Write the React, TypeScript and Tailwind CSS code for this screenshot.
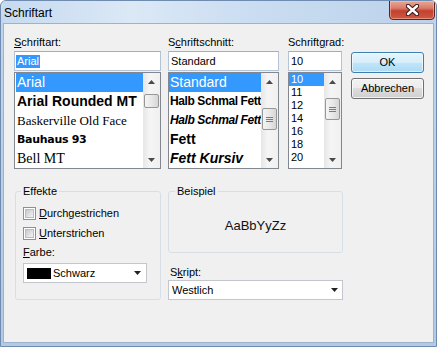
import React from 'react';

type Row = { text: string; cls: string; selected?: boolean };

const fontRows: Row[] = [
  { text: 'Arial', cls: "text-[14px] font-['Liberation_Sans',Arial,sans-serif]", selected: true },
  { text: 'Arial Rounded MT', cls: "text-[14px] font-bold font-['Liberation_Sans',Arial,sans-serif]" },
  { text: 'Baskerville Old Face', cls: "text-[13px] font-['Liberation_Serif',serif]" },
  { text: 'Bauhaus 93', cls: "text-[11px] font-bold tracking-[-0.3px] font-['DejaVu_Sans',sans-serif]" },
  { text: 'Bell MT', cls: "text-[14px] font-['Liberation_Serif',serif]" },
];

const styleRows: Row[] = [
  { text: 'Standard', cls: 'text-[14px]', selected: true },
  { text: 'Halb Schmal Fett', cls: 'text-[12px] font-bold tracking-[-0.4px]' },
  { text: 'Halb Schmal Fett', cls: 'text-[12px] font-bold italic tracking-[-0.4px]' },
  { text: 'Fett', cls: 'text-[14px] font-bold' },
  { text: 'Fett Kursiv', cls: 'text-[14px] font-bold italic' },
];

const sizes = ['10', '11', '12', '14', '16', '18', '20'];

function Arrow({ up, color = '#222' }: { up?: boolean; color?: string }) {
  return (
    <svg width="7" height="4" viewBox="0 0 7 4" className="shrink-0">
      <path d={up ? 'M0 4 L3.5 0 L7 4 Z' : 'M0 0 L7 0 L3.5 4 Z'} fill={color} />
    </svg>
  );
}

function ScrollBar({ thumb, grip }: { thumb: string; grip?: boolean }) {
  return (
    <div className="w-[17px] shrink-0 flex flex-col bg-[linear-gradient(to_right,#e6e6e6,#f5f5f5_40%,#f0f0f0)]">
      <div className="h-[17px] flex items-center justify-center">
        <Arrow up color="#4a4a4a" />
      </div>
      <div className="flex-1 px-[1px]">
        <div
          className={`${thumb} rounded-[2px] border border-[#979797] bg-[linear-gradient(to_right,#f4f4f4,#e8e8e8_50%,#d6d6d6)] flex flex-col items-center justify-center gap-[1px]`}
        >
          {grip && (
            <>
              <div className="w-[7px] h-[1px] bg-[#7c7c7c]" />
              <div className="w-[7px] h-[1px] bg-[#7c7c7c]" />
              <div className="w-[7px] h-[1px] bg-[#7c7c7c]" />
            </>
          )}
        </div>
      </div>
      <div className="h-[17px] flex items-center justify-center">
        <Arrow color="#4a4a4a" />
      </div>
    </div>
  );
}

function Label({ pre, u, post }: { pre?: string; u: string; post: string }) {
  return (
    <div className="h-[13px] leading-[13px] text-[11px] text-black whitespace-nowrap">
      {pre}
      <span className="underline underline-offset-[1px]">{u}</span>
      {post}
    </div>
  );
}

function TextBox({ children }: { children: React.ReactNode }) {
  return (
    <div className="h-[20px] mb-[1px] flex items-center bg-white border border-[#b4c3d5] border-t-[#a3adbb] pl-[1px] text-[11px] leading-[13px]">
      {children}
    </div>
  );
}

function Check({ u, rest }: { u: string; rest: string }) {
  return (
    <div className="flex items-center h-[13px]">
      <div className="w-[13px] h-[13px] border border-[#8e8f8f] bg-white p-[1px]">
        <div className="w-full h-full border border-[#b9bdc3] bg-[linear-gradient(135deg,#c4c8ce,#f3f3f3)]" />
      </div>
      <span className="ml-[3px] text-[11px] leading-[13px]">
        <span className="underline underline-offset-[1px]">{u}</span>
        {rest}
      </span>
    </div>
  );
}

export default function App() {
  return (
    <div className="w-[437px] h-[347px] flex flex-col border border-[#6f8bb0] rounded-t-[6px] bg-[linear-gradient(to_bottom,#d3e3f4_0px,#bfd5ec_22px,#b2cae5_100%)] px-[2px] pb-[3px] overflow-hidden font-['Liberation_Sans',Arial,sans-serif] text-black">
      {/* title bar */}
      <div className="h-[22px] shrink-0 flex items-start bg-[linear-gradient(to_right,#c6daf0,#dbe8f6_30%,#c9dcf1_60%,#bcd2ea)]">
        <span className="mt-[5px] ml-[1px] text-[12px] leading-[14px]">Schriftart</span>
        <div className="ml-auto -mr-[1px] -mt-[1px] w-[46px] h-[20px] rounded-b-[4px] border border-[#5a2420] bg-[linear-gradient(to_bottom,#e8a899_0%,#d97a68_40%,#c2412f_55%,#cf5a40_100%)] flex items-center justify-center shadow-[inset_0_0_0_1px_rgba(255,200,190,0.5)]">
          <svg width="13" height="12" viewBox="0 0 13 12">
            <path d="M2 2 L11 10 M11 2 L2 10" stroke="#3a1a18" strokeWidth="4.5" strokeLinecap="round" />
            <path d="M2 2 L11 10 M11 2 L2 10" stroke="#ffffff" strokeWidth="2.4" strokeLinecap="round" />
          </svg>
        </div>
      </div>

      {/* client area */}
      <div className="flex-1 bg-[#f0f0f0] border border-[#9db3cc] pl-[10px] pt-[12px]">
        <div className="flex items-start">
          {/* Schriftart */}
          <div className="w-[147px]">
            <div className="mb-[2px]">
              <Label u="S" post="chriftart:" />
            </div>
            <TextBox>
              <span className="bg-[#3399ff] text-white px-[1px]">Arial</span>
            </TextBox>
            <div className="h-[97px] flex bg-white border border-[#828790] pl-[1px]">
              <div className="flex-1 min-w-0 overflow-hidden">
                {fontRows.map((r, i) => (
                  <div
                    key={i}
                    className={`h-[19px] leading-[19px] pl-[1px] whitespace-nowrap overflow-hidden ${r.cls} ${r.selected ? 'bg-[#3399ff] text-white' : 'text-black'}`}
                  >
                    {r.text}
                  </div>
                ))}
              </div>
              <ScrollBar thumb="mt-[4px] h-[14px]" />
            </div>
          </div>

          {/* Schriftschnitt */}
          <div className="w-[111px] ml-[7px]">
            <div className="mb-[2px]">
              <Label pre="S" u="c" post="hriftschnitt:" />
            </div>
            <TextBox>
              <span className="px-[1px]">Standard</span>
            </TextBox>
            <div className="h-[97px] flex bg-white border border-[#828790]">
              <div className="flex-1 min-w-0 overflow-hidden">
                {styleRows.map((r, i) => (
                  <div
                    key={i}
                    className={`h-[19px] leading-[19px] pl-[1px] whitespace-nowrap overflow-hidden ${r.cls} ${r.selected ? 'bg-[#3399ff] text-white' : 'text-black'}`}
                  >
                    {r.text}
                  </div>
                ))}
              </div>
              <ScrollBar thumb="mt-[18px] h-[22px]" grip />
            </div>
          </div>

          {/* Schriftgrad */}
          <div className="w-[54px] ml-[9px]">
            <div className="mb-[2px]">
              <Label pre="Schrift" u="g" post="rad:" />
            </div>
            <TextBox>
              <span className="px-[1px]">10</span>
            </TextBox>
            <div className="h-[97px] flex bg-white border border-[#828790]">
              <div className="flex-1 min-w-0 overflow-hidden">
                {sizes.map((s, i) => (
                  <div
                    key={s}
                    className={`h-[13px] leading-[13px] pl-[2px] text-[11px] ${i === 0 ? 'bg-[#3399ff] text-white' : 'text-black'}`}
                  >
                    {s}
                  </div>
                ))}
              </div>
              <ScrollBar thumb="mt-[8px] h-[22px]" grip />
            </div>
          </div>

          {/* buttons */}
          <div className="w-[73px] ml-[9px] pt-[16px] flex flex-col gap-[5px]">
            <div className="h-[21px] rounded-[3px] border border-[#3c7fb1] bg-[linear-gradient(to_bottom,#e5f4fc_0%,#d6eefb_50%,#c2e5f9_50%,#acdaf3_100%)] shadow-[inset_0_0_0_1px_rgba(255,255,255,0.6)] flex items-center justify-center text-[11px]">
              OK
            </div>
            <div className="h-[21px] rounded-[3px] border border-[#707070] bg-[linear-gradient(to_bottom,#f2f2f2_0%,#ebebeb_50%,#dddddd_50%,#cfcfcf_100%)] shadow-[inset_0_0_0_1px_rgba(255,255,255,0.7)] flex items-center justify-center text-[11px]">
              Abbrechen
            </div>
          </div>
        </div>

        {/* lower part */}
        <div className="flex items-start mt-[16px]">
          <fieldset className="ml-[1px] w-[146px] h-[115px] border border-[#d5dfe5] rounded-[3px] pl-[7px]">
            <legend className="ml-[-2px] px-[2px] text-[11px] leading-[13px]">Effekte</legend>
            <div className="mt-[9px]">
              <Check u="D" rest="urchgestrichen" />
            </div>
            <div className="mt-[7px]">
              <Check u="U" rest="nterstrichen" />
            </div>
            <div className="mt-[6px]">
              <Label u="F" post="arbe:" />
            </div>
            <div className="mt-[4px] w-[124px] h-[20px] bg-white border border-[#c3c6cc] flex items-center pl-[3px] pr-[5px]">
              <div className="w-[24px] h-[11px] bg-black shrink-0" />
              <span className="ml-[2px] text-[11px] leading-[13px]">Schwarz</span>
              <div className="ml-auto">
                <Arrow />
              </div>
            </div>
          </fieldset>

          <div className="ml-[7px] w-[175px]">
            <fieldset className="h-[68px] border border-[#d5dfe5] rounded-[3px] flex flex-col">
              <legend className="ml-[6px] px-[2px] text-[11px] leading-[13px]">Beispiel</legend>
              <div className="h-[54px] flex items-center justify-center text-[13px] leading-[15px] text-[#111]">
                AaBbYyZz
              </div>
            </fieldset>
            <div className="mt-[13px] pl-[2px]">
              <Label pre="S" u="k" post="ript:" />
            </div>
            <div className="mt-[1px] h-[20px] bg-white border border-[#c3c6cc] flex items-center pl-[3px] pr-[4px]">
              <span className="text-[11px] leading-[13px]">Westlich</span>
              <div className="ml-auto">
                <Arrow />
              </div>
            </div>
          </div>
        </div>
      </div>
    </div>
  );
}
